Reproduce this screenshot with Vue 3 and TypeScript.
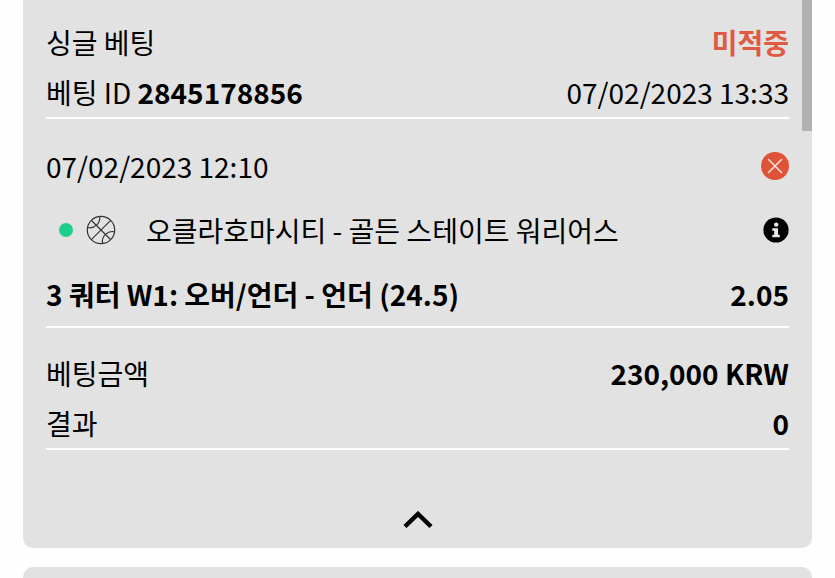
<script setup lang="ts">
interface Bet {
  kind: string
  status: string
  id: string
  placedAt: string
  startsAt: string
  match: string
  market: string
  odds: string
  stake: string
  result: string
}

const bet: Bet = {
  kind: '싱글 베팅',
  status: '미적중',
  id: '2845178856',
  placedAt: '07/02/2023 13:33',
  startsAt: '07/02/2023 12:10',
  match: '오클라호마시티 - 골든 스테이트 워리어스',
  market: '3 쿼터 W1: 오버/언더 - 언더 (24.5)',
  odds: '2.05',
  stake: '230,000 KRW',
  result: '0',
}
</script>

<template>
  <main class="history">
    <article class="card">
      <header class="section summary">
        <div class="row">
          <span>{{ bet.kind }}</span>
          <strong class="status">{{ bet.status }}</strong>
        </div>
        <div class="row">
          <span>베팅 ID <strong>{{ bet.id }}</strong></span>
          <time>{{ bet.placedAt }}</time>
        </div>
      </header>

      <section class="section event">
        <div class="row">
          <time>{{ bet.startsAt }}</time>
          <svg class="icon" viewBox="0 0 28 28" aria-hidden="true">
            <circle cx="14" cy="14" r="14" fill="#df5338" />
            <path d="M7.5 7.5l13 13M20.5 7.5l-13 13" stroke="#f8dfd8" stroke-width="1.6" stroke-linecap="round" />
          </svg>
        </div>
        <div class="row match">
          <span class="dot"></span>
          <svg class="ball" viewBox="0 0 30 30" aria-hidden="true">
            <g fill="none" stroke="#333" stroke-width="1.2">
              <circle cx="15" cy="15" r="13.7" />
              <path d="M5.500 5.500l19 19M5.300 24.700L24.700 5.300" />
              <path d="M13.700 1.400A10 10 0 0 1 1.500 12.500M28.600 16.800A10 10 0 0 0 16.600 28.500" />
            </g>
          </svg>
          <span class="teams">{{ bet.match }}</span>
          <button class="info" type="button" aria-label="경기 정보">
            <svg viewBox="0 0 26 26" aria-hidden="true">
              <circle cx="13" cy="13" r="12.600" fill="#000" />
              <circle cx="13.200" cy="7.600" r="2.200" fill="#e8e8e8" />
              <path d="M9.300 11.200h5.700v6.500h1.800v2.500H9.300v-2.500h1.900v-4H9.300z" fill="#e8e8e8" />
            </svg>
          </button>
        </div>
        <div class="row market">
          <strong>{{ bet.market }}</strong>
          <strong>{{ bet.odds }}</strong>
        </div>
      </section>

      <section class="section totals">
        <div class="row">
          <span>베팅금액</span>
          <strong>{{ bet.stake }}</strong>
        </div>
        <div class="row">
          <span>결과</span>
          <strong>{{ bet.result }}</strong>
        </div>
      </section>

      <button class="toggle" type="button" aria-label="접기">
        <svg viewBox="0 0 30 18" aria-hidden="true">
          <path d="M2 15.500L15 3l13 12.500" fill="none" stroke="#000" stroke-width="4.500" />
        </svg>
      </button>
    </article>
    <article class="card next"></article>
    <div class="scrollbar"></div>
  </main>
</template>

<style>
body {
  background: #fefefe;
}
</style>

<style scoped>
.history {
  position: relative;
  box-sizing: border-box;
  height: 100vh;
  overflow: hidden;
  padding: 0 23px;
  color: #000;
  font: 28px/50px "Noto Sans CJK KR", "Noto Sans", sans-serif;
}
.card {
  padding: 17px 23px 0;
  border-radius: 0 0 10px 10px;
  background: #e2e2e2;
}
.section {
  border-bottom: 2px solid #fff;
}
.row {
  display: flex;
  align-items: center;
  justify-content: space-between;
  height: 50px;
  white-space: nowrap;
}
strong {
  font-weight: 700;
}
.status {
  color: #df5a40;
}
.event {
  display: grid;
  gap: 14px;
  padding: 22px 0 7px;
}
.icon {
  width: 28px;
  height: 28px;
}
.match {
  justify-content: flex-start;
}
.dot {
  width: 14px;
  height: 14px;
  margin: 0 13px;
  border-radius: 50%;
  background: #20ce8b;
}
.ball {
  width: 30px;
  height: 30px;
}
.teams {
  margin-left: 30px;
}
.info,
.toggle {
  padding: 0;
  border: 0;
  background: none;
  color: inherit;
  cursor: pointer;
}
.info {
  display: flex;
  width: 26px;
  height: 26px;
  margin-left: auto;
}
.totals {
  padding-top: 20px;
}
.toggle {
  display: flex;
  align-items: center;
  justify-content: center;
  width: 100%;
  height: 98px;
  padding-top: 42px;
}
.toggle svg {
  width: 30px;
  height: 18px;
}
.next {
  height: 60px;
  margin-top: 19px;
  border-radius: 10px;
}
.scrollbar {
  position: absolute;
  top: 0;
  right: 23px;
  width: 10px;
  height: 131px;
  background: #b1b1b1;
}
</style>
